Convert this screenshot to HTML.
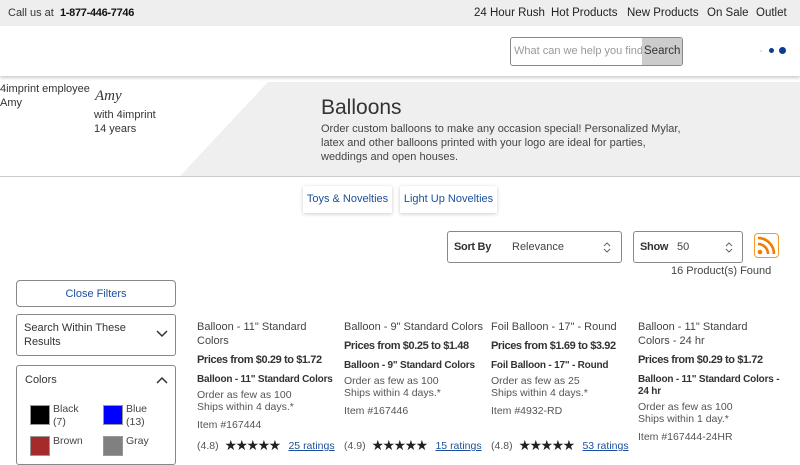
<!DOCTYPE html>
<html><head><meta charset="utf-8"><style>
*{box-sizing:border-box;margin:0;padding:0}
body{width:800px;height:450px;overflow:hidden;font-family:"Liberation Sans",Arial,sans-serif;color:#333;background:#fff;position:relative}
.a{position:absolute;white-space:nowrap}
.top{position:absolute;left:0;top:0;width:800px;height:26px;background:#eee}
.hdr{position:absolute;left:0;top:26px;width:800px;height:50px;background:#fff;box-shadow:0 2px 3px rgba(0,0,0,.2)}
.box{position:absolute;border:1px solid #888;border-radius:3px;background:#fff}
.p{font-size:10.5px;color:#555}
.t{font-size:11px;color:#444;line-height:14px}
.b{font-weight:bold;color:#333}
.pr{font-size:11px;letter-spacing:-0.4px}
.sb{font-size:10px;letter-spacing:-0.2px}
.lnk{color:#1a4f9c;text-decoration:underline;font-size:10.5px}
.st{font-size:14px;letter-spacing:-1.5px;color:#222;vertical-align:-1px}
.nav{top:7px;font-size:11.5px;color:#222}
.sw{position:absolute;width:20px;height:20px;border:1px solid #999}
</style></head><body>
<div class="top"></div>
<div class="a" style="left:8px;top:7px;font-size:11px;color:#333">Call us at &nbsp;<span style="color:#111;font-weight:bold;letter-spacing:-0.3px">1-877-446-7746</span></div>
<div class="a nav" style="left:474px">24 Hour Rush</div>
<div class="a nav" style="left:551px">Hot Products</div>
<div class="a nav" style="left:627px">New Products</div>
<div class="a nav" style="left:707px">On Sale</div>
<div class="a nav" style="left:756px">Outlet</div>
<div class="hdr"></div>
<div class="box" style="left:510px;top:37px;width:173px;height:29px;border-radius:3px;overflow:hidden">
<div class="a" style="left:3px;top:7px;font-size:11px;color:#999">What can we help you find?</div>
<div class="a" style="left:131px;top:0;width:41px;height:27px;background:#ccc;font-size:11.5px;color:#333;padding:7px 0 0 2px">Search</div></div>
<div class="a" style="left:760px;top:50px;width:2px;height:2px;border-radius:50%;background:#cde"></div>
<div class="a" style="left:769px;top:48px;width:5px;height:5px;border-radius:50%;background:#0a3d8f"></div>
<div class="a" style="left:779px;top:47px;width:7px;height:7px;border-radius:50%;background:#0a3d8f"></div>
<svg class="a" style="left:0;top:82px" width="800" height="95"><polygon points="268,0 800,0 800,94 180,94" fill="#efefef"/><line x1="0" y1="94.5" x2="800" y2="94.5" stroke="#ccc"/></svg>
<div class="a" style="left:0;top:82px;font-size:11px;color:#333;line-height:14px">4imprint employee<br>Amy</div>
<div class="a" style="left:95px;top:88px;font-size:15px;font-style:italic;font-family:'Liberation Serif',serif;color:#333">Amy</div>
<div class="a" style="left:94px;top:108px;font-size:11px;color:#333;line-height:14px">with 4imprint<br>14 years</div>
<div class="a" style="left:321px;top:96px;font-size:21px;color:#333">Balloons</div>
<div class="a" style="left:321px;top:122px;font-size:11px;color:#444;line-height:14px">Order custom balloons to make any occasion special! Personalized Mylar,<br>latex and other balloons printed with your logo are ideal for parties,<br>weddings and open houses.</div>
<div class="a" style="left:303px;top:186px;width:89px;height:27px;box-shadow:0 1px 4px rgba(0,0,0,.2);font-size:11px;color:#1a4f9c;text-align:center;padding-top:7px">Toys &amp; Novelties</div>
<div class="a" style="left:400px;top:186px;width:97px;height:27px;box-shadow:0 1px 4px rgba(0,0,0,.2);font-size:11px;color:#1a4f9c;text-align:center;padding-top:7px">Light Up Novelties</div>
<div class="box" style="left:447px;top:231px;width:175px;height:32px"><div class="a" style="left:6px;top:9px;font-size:11px;font-weight:bold;letter-spacing:-0.3px">Sort By</div><div class="a" style="left:64px;top:9px;font-size:11px;color:#444">Relevance</div><svg class="a" style="left:155px;top:10px" width="8" height="11"><path d="M1 4l3-3 3 3M1 7l3 3 3-3" stroke="#666" fill="none"/></svg></div>
<div class="box" style="left:633px;top:231px;width:110px;height:32px"><div class="a" style="left:6px;top:9px;font-size:11px;font-weight:bold;letter-spacing:-0.3px">Show</div><div class="a" style="left:43px;top:9px;font-size:11px;color:#444">50</div><svg class="a" style="left:91px;top:10px" width="8" height="11"><path d="M1 4l3-3 3 3M1 7l3 3 3-3" stroke="#666" fill="none"/></svg></div>
<div class="a" style="left:754px;top:233px;width:25px;height:25px;border:1px solid #f39a2a;border-radius:4px;background:#fff">
<svg width="23" height="23" viewBox="0 0 23 23"><circle cx="5" cy="18" r="2.3" fill="#f07d00"/><path d="M3 10a10 10 0 0 1 10 10" stroke="#f07d00" stroke-width="2.6" fill="none"/><path d="M3 4a16 16 0 0 1 16 16" stroke="#f07d00" stroke-width="2.6" fill="none"/></svg></div>
<div class="a" style="left:671px;top:265px;font-size:11px;color:#444">16 Product(s) Found</div>
<div class="box" style="left:16px;top:280px;width:160px;height:27px;border-radius:4px;font-size:11px;color:#1a4f9c;text-align:center;padding-top:7px">Close Filters</div>
<div class="box" style="left:16px;top:314px;width:160px;height:42px"><div class="a" style="left:7px;top:6px;font-size:11px;line-height:14px;color:#333">Search Within These<br>Results</div><svg class="a" style="left:139px;top:15px" width="12" height="8"><path d="M1 1l5 5 5-5" stroke="#333" stroke-width="1.5" fill="none"/></svg></div>
<div class="box" style="left:16px;top:365px;width:160px;height:100px"><div class="a" style="left:8px;top:8px;font-size:11px;color:#333">Colors</div><svg class="a" style="left:139px;top:10px" width="12" height="8"><path d="M1 7l5-5 5 5" stroke="#333" stroke-width="1.5" fill="none"/></svg></div>
<div class="sw" style="left:30px;top:405px;background:#000"></div>
<div class="a t" style="left:53px;top:403px;font-size:10.5px;line-height:13px">Black<br>(7)</div>
<div class="sw" style="left:103px;top:405px;background:#00f"></div>
<div class="a t" style="left:126px;top:403px;font-size:10.5px;line-height:13px">Blue<br>(13)</div>
<div class="sw" style="left:30px;top:436px;background:#a52a2a"></div>
<div class="a t" style="left:53px;top:434px;font-size:10.5px">Brown</div>
<div class="sw" style="left:103px;top:436px;background:#808080"></div>
<div class="a t" style="left:126px;top:434px;font-size:10.5px">Gray</div>

<div class="a t" style="left:197px;top:320px">Balloon - 11" Standard<br>Colors</div>
<div class="a b pr" style="left:197px;top:354px">Prices from $0.29 to $1.72</div>
<div class="a b sb" style="left:197px;top:374px">Balloon - 11" Standard Colors</div>
<div class="a p" style="left:197px;top:389px;line-height:12px">Order as few as 100<br>Ships within 4 days.*</div>
<div class="a p" style="left:197px;top:419px">Item #167444</div>
<div class="a p" style="left:197px;top:437px">(4.8) &nbsp;<span class="st">★★★★★</span> &nbsp;&nbsp;<span class="lnk">25 ratings</span></div>

<div class="a t" style="left:344px;top:320px">Balloon - 9" Standard Colors</div>
<div class="a b pr" style="left:344px;top:340px">Prices from $0.25 to $1.48</div>
<div class="a b sb" style="left:344px;top:360px">Balloon - 9" Standard Colors</div>
<div class="a p" style="left:344px;top:375px;line-height:12px">Order as few as 100<br>Ships within 4 days.*</div>
<div class="a p" style="left:344px;top:405px">Item #167446</div>
<div class="a p" style="left:344px;top:437px">(4.9) &nbsp;<span class="st">★★★★★</span> &nbsp;&nbsp;<span class="lnk">15 ratings</span></div>

<div class="a t" style="left:491px;top:320px">Foil Balloon - 17" - Round</div>
<div class="a b pr" style="left:491px;top:340px">Prices from $1.69 to $3.92</div>
<div class="a b sb" style="left:491px;top:360px">Foil Balloon - 17" - Round</div>
<div class="a p" style="left:491px;top:375px;line-height:12px">Order as few as 25<br>Ships within 4 days.*</div>
<div class="a p" style="left:491px;top:405px">Item #4932-RD</div>
<div class="a p" style="left:491px;top:437px">(4.8) &nbsp;<span class="st">★★★★★</span> &nbsp;&nbsp;<span class="lnk">53 ratings</span></div>

<div class="a t" style="left:638px;top:320px">Balloon - 11" Standard<br>Colors - 24 hr</div>
<div class="a b pr" style="left:638px;top:354px">Prices from $0.29 to $1.72</div>
<div class="a b sb" style="left:638px;top:374px;line-height:12px">Balloon - 11" Standard Colors -<br>24 hr</div>
<div class="a p" style="left:638px;top:401px;line-height:12px">Order as few as 100<br>Ships within 1 day.*</div>
<div class="a p" style="left:638px;top:431px">Item #167444-24HR</div>
</body></html>
